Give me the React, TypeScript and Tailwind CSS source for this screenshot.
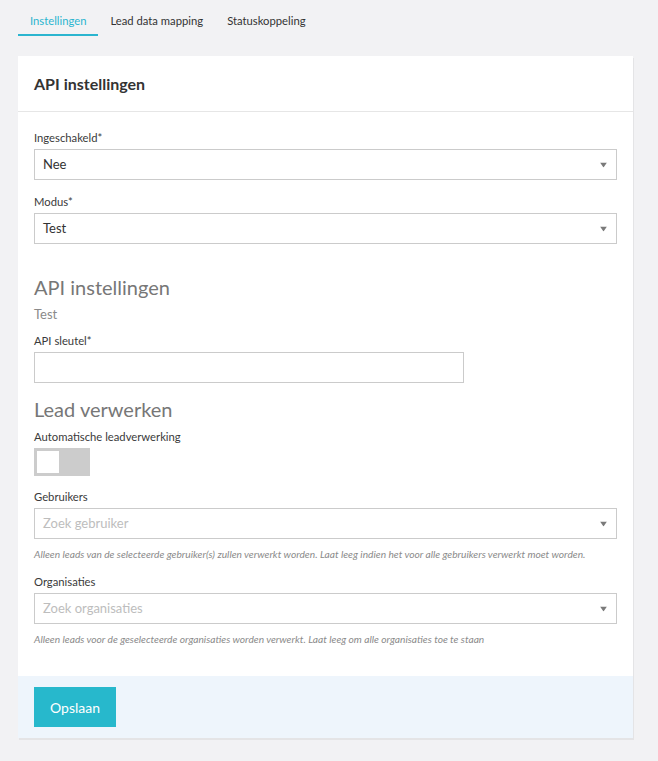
import { useState } from 'react';

const tabs = ['Instellingen', 'Lead data mapping', 'Statuskoppeling'];

function Caret() {
  return (
    <svg width="7" height="5" viewBox="0 0 7 5" className="absolute right-[9px] top-1/2 -translate-y-1/2">
      <path d="M0 0h7L3.5 5z" fill="#7a7a7a" />
    </svg>
  );
}

function Select({ value, placeholder }: { value?: string; placeholder?: string }) {
  return (
    <div className="relative h-[31px] border border-[#cbcbcb] bg-white flex items-center px-2 text-[13px]">
      {value ? (
        <span className="text-[#333]">{value}</span>
      ) : (
        <span className="text-[#bdbdbd]">{placeholder}</span>
      )}
      <Caret />
    </div>
  );
}

function Label({ children }: { children: React.ReactNode }) {
  return <div className="text-[11.25px] leading-[15px] text-[#3a3a3a] mb-1">{children}</div>;
}

function Help({ children }: { children: React.ReactNode }) {
  return <div className="mt-[8px] text-[10.2px] leading-[14px] italic text-[#8a8a8a]">{children}</div>;
}

export default function App() {
  const [active, setActive] = useState(0);
  const [auto, setAuto] = useState(false);

  return (
    <div
      className="min-h-[761px] bg-[#f2f2f4] pl-[18px] pr-[25px] pt-2 pb-6"
      style={{ fontFamily: 'Lato, "Open Sans", sans-serif' }}
    >
      <div className="flex">
        {tabs.map((t, i) => (
          <button
            key={t}
            onClick={() => setActive(i)}
            className={
              i === active
                ? 'h-[28px] pt-[1px] px-3 text-[11.25px] text-[#2bb5cf] border-b-2 border-[#2bb5cf]'
                : 'h-[28px] pt-[1px] px-3 text-[11.25px] text-[#333] border-b-2 border-transparent'
            }
          >
            {t}
          </button>
        ))}
      </div>

      <div className="mt-5 bg-white shadow-[1px_2px_0_#e4e4e6]">
        <div className="h-[56px] flex items-center px-4 border-b border-[#e6e6e6]">
          <h2 className="text-[16px] font-bold text-[#333]">API instellingen</h2>
        </div>

        <div className="px-4 pt-[18px] pb-[30px]">
          <Label>Ingeschakeld*</Label>
          <Select value="Nee" />

          <div className="mt-[14px]">
            <Label>Modus*</Label>
            <Select value="Test" />
          </div>

          <h3 className="mt-[29px] text-[20px] leading-7 text-[#777]">API instellingen</h3>
          <div className="mt-[3px] text-[13px] leading-5 text-[#8a8a8a]">Test</div>

          <div className="mt-[9px]">
            <Label>API sleutel*</Label>
            <div className="h-[31px] w-[430px] border border-[#cbcbcb] bg-white" />
          </div>

          <h3 className="mt-[12px] text-[20px] leading-7 text-[#777]">Lead verwerken</h3>
          <div className="mt-[6px]">
            <Label>Automatische leadverwerking</Label>
            <button
              onClick={() => setAuto(!auto)}
              className={
                auto
                  ? 'w-[56px] h-[28px] bg-[#27b8cc] p-[3px] flex justify-end'
                  : 'w-[56px] h-[28px] bg-[#cccccc] p-[3px] flex justify-start'
              }
            >
              <span className="block w-[22px] h-[22px] bg-white" />
            </button>
          </div>

          <div className="mt-[13px]">
            <Label>Gebruikers</Label>
            <Select placeholder="Zoek gebruiker" />
            <Help>
              Alleen leads van de selecteerde gebruiker(s) zullen verwerkt worden. Laat leeg indien het voor alle gebruikers verwerkt moet worden.
            </Help>
          </div>

          <div className="mt-[13px]">
            <Label>Organisaties</Label>
            <Select placeholder="Zoek organisaties" />
            <Help>
              Alleen leads voor de geselecteerde organisaties worden verwerkt. Laat leeg om alle organisaties toe te staan
            </Help>
          </div>
        </div>

        <div className="bg-[#eef5fc] px-4 py-[11px]">
          <button className="h-[40px] px-4 bg-[#27b8cc] text-white text-[14px]">Opslaan</button>
        </div>
      </div>
    </div>
  );
}
